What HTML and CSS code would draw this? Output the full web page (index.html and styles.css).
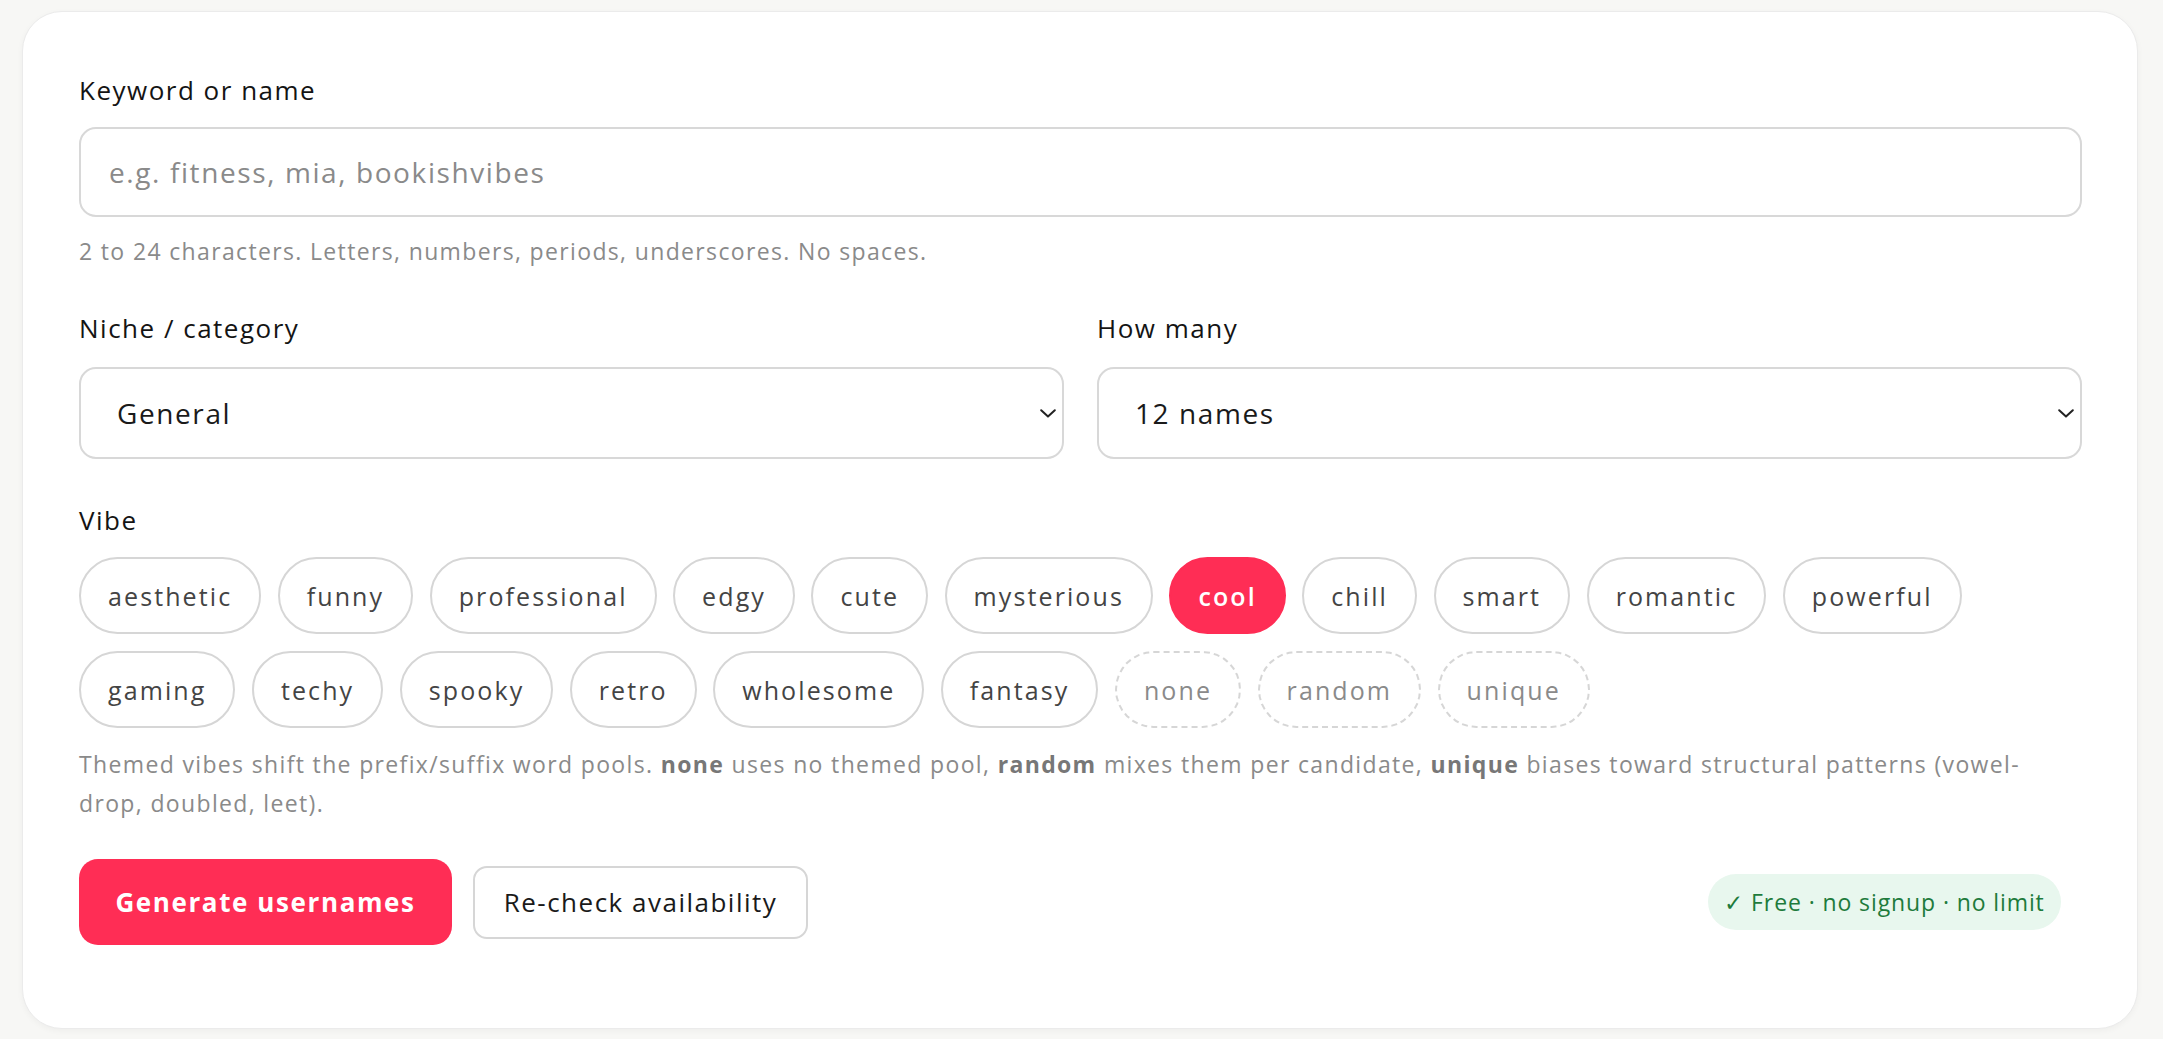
FILE: index.html
```html
<!DOCTYPE html>
<html lang="en">
<head>
<meta charset="utf-8">
<title>Username generator</title>
<link rel="stylesheet" href="styles.css">
</head>
<body>
<div class="card">
  <div class="field">
    <label class="label">Keyword or name</label>
    <div class="input"><span class="placeholder">e.g. fitness, mia, bookishvibes</span></div>
    <p class="hint">2 to 24 characters. Letters, numbers, periods, underscores. No spaces.</p>
  </div>

  <div class="grid2">
    <div class="field">
      <label class="label">Niche / category</label>
      <div class="select"><span>General</span>
        <svg class="chev" viewBox="0 0 16 9"><path d="M1.2 1.2 L8 7.6 L14.8 1.2" fill="none" stroke="#222" stroke-width="2" stroke-linecap="round" stroke-linejoin="round"/></svg>
      </div>
    </div>
    <div class="field">
      <label class="label">How many</label>
      <div class="select"><span>12 names</span>
        <svg class="chev" viewBox="0 0 16 9"><path d="M1.2 1.2 L8 7.6 L14.8 1.2" fill="none" stroke="#222" stroke-width="2" stroke-linecap="round" stroke-linejoin="round"/></svg>
      </div>
    </div>
  </div>

  <div class="field vibe">
    <label class="label">Vibe</label>
    <div class="chips">
      <span class="chip">aesthetic</span>
      <span class="chip">funny</span>
      <span class="chip">professional</span>
      <span class="chip">edgy</span>
      <span class="chip">cute</span>
      <span class="chip">mysterious</span>
      <span class="chip active">cool</span>
      <span class="chip">chill</span>
      <span class="chip">smart</span>
      <span class="chip">romantic</span>
      <span class="chip">powerful</span>
      <span class="chip">gaming</span>
      <span class="chip">techy</span>
      <span class="chip">spooky</span>
      <span class="chip">retro</span>
      <span class="chip">wholesome</span>
      <span class="chip">fantasy</span>
      <span class="chip meta">none</span>
      <span class="chip meta">random</span>
      <span class="chip meta">unique</span>
    </div>
    <p class="hint note">Themed vibes shift the prefix/suffix word pools. <b>none</b> uses no themed pool, <b>random</b> mixes them per candidate, <b>unique</b> biases toward structural patterns (vowel-drop, doubled, leet).</p>
  </div>

  <div class="actions">
    <button class="btn primary">Generate usernames</button>
    <button class="btn secondary">Re-check availability</button>
    <span class="badge">✓ Free · no signup · no limit</span>
  </div>
</div>
</body>
</html>
```

FILE: styles.css
```css
* { box-sizing: border-box; }
html, body { margin: 0; padding: 0; }
body {
  background: #f7f7f5;
  font-family: "Open Sans", "Noto Sans", sans-serif;
  color: #1a1a1a;
  padding: 11px 25px 10px 22px;
}
.card {
  background: #fff;
  border: 1px solid #ebebeb;
  border-radius: 40px;
  box-shadow: 0 2px 6px rgba(0,0,0,0.04);
  padding: 62px 55px 83px 56px;
  height: 1018px;
}
.field { display: flex; flex-direction: column; }
.label {
  font-size: 26px;
  line-height: 32px;
  font-weight: 500;
  letter-spacing: 1.5px;
  color: #141414;
  margin-bottom: 21px;
}
.input {
  height: 90px;
  border: 2px solid #d8d8d8;
  border-radius: 17px;
  display: flex;
  align-items: center;
  padding-left: 28px;
}
.placeholder { font-size: 28px; letter-spacing: 1.6px; color: #8a8a8a; }
.hint {
  margin: 19px 0 0;
  font-size: 23px;
  line-height: 30px;
  letter-spacing: 1.35px;
  color: #8a8a8a;
}
.grid2 {
  display: grid;
  grid-template-columns: 1fr 1fr;
  column-gap: 33px;
  margin-top: 46px;
}
.grid2 .label { margin-bottom: 23px; }
.select {
  height: 92px;
  border: 2px solid #d8d8d8;
  border-radius: 17px;
  display: flex;
  align-items: center;
  justify-content: space-between;
  padding: 0 6px 0 36px;
  font-size: 28px;
  letter-spacing: 1.6px;
  color: #1a1a1a;
}
.chev { display: block; width: 16px; height: 9px; }
.vibe { margin-top: 45px; }
.chips {
  display: flex;
  flex-wrap: wrap;
  column-gap: 16.5px;
  row-gap: 17px;
}
.chip {
  height: 77px;
  display: inline-flex;
  align-items: center;
  padding: 0 27px;
  border: 2px solid #d6d6d6;
  border-radius: 999px;
  font-size: 25px;
  letter-spacing: 2.1px;
  color: #444;
  background: #fff;
}
.chip.active {
  background: #ff2d55;
  border-color: #ff2d55;
  color: #fff;
  font-weight: 600;
}
.chip.meta {
  border-style: dashed;
  color: #8a8a8a;
}
.note {
  margin-top: 17px;
  line-height: 39px;
}
.note b { color: #777; font-weight: 700; }
.actions {
  display: flex;
  align-items: center;
  gap: 21px;
  margin-top: 36px;
}
.btn {
  font-family: inherit;
  cursor: pointer;
}
.primary {
  height: 86px;
  width: 373px;
  background: #ff2d55;
  color: #fff;
  border: none;
  font-size: 26px;
  font-weight: 700;
  letter-spacing: 1.6px;
  border-radius: 19px;
}
.secondary {
  height: 73px;
  width: 335px;
  background: #fff;
  color: #1a1a1a;
  border: 2px solid #d6d6d6;
  font-size: 26px;
  font-weight: 500;
  letter-spacing: 1.5px;
  border-radius: 14px;
}
.badge {
  margin-left: auto;
  margin-right: 21px;
  height: 56px;
  width: 353px;
  border-radius: 28px;
  background: #e8f7ee;
  color: #1e7b3c;
  font-size: 23px;
  font-weight: 500;
  letter-spacing: 0.9px;
  display: inline-flex;
  align-items: center;
  justify-content: center;
}
```
